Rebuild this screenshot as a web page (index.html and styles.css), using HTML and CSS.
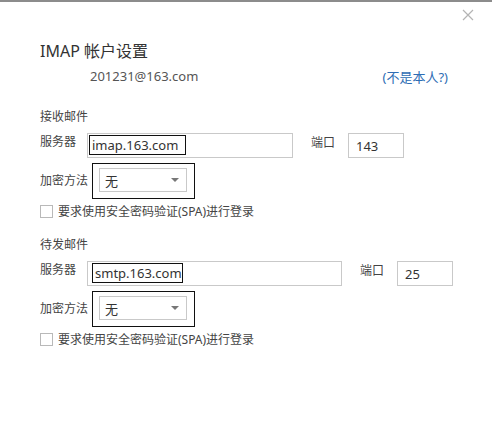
FILE: index.html
```html
<!DOCTYPE html>
<html lang="zh-CN">
<head>
<meta charset="utf-8">
<title>IMAP 帐户设置</title>
<link rel="stylesheet" href="styles.css">
</head>
<body>
<div class="dialog">
  <div class="topbar">
    <svg class="close" width="12" height="12" viewBox="0 0 12 12"><path d="M1 1 L11 11 M11 1 L1 11" stroke="#b4b4b4" stroke-width="1.2" fill="none"/></svg>
  </div>
  <h1 class="title">IMAP 帐户设置</h1>
  <div class="account">
    <span class="email">201231@163.com</span>
    <a class="notme">(不是本人?)</a>
  </div>

  <section class="group first">
    <div class="group-title">接收邮件</div>
    <div class="server-row">
      <span class="label">服务器</span>
      <div class="input server s1"><span class="mark">imap.163.com</span></div>
      <span class="label port-label">端口</span>
      <div class="input port">143</div>
    </div>
    <div class="enc-row">
      <span class="label">加密方法</span>
      <div class="mark-box">
        <div class="select"><span>无</span><span class="arrow"></span></div>
      </div>
    </div>
    <label class="check-row"><span class="checkbox"></span><span class="check-text">要求使用安全密码验证(SPA)进行登录</span></label>
  </section>

  <section class="group second">
    <div class="group-title">待发邮件</div>
    <div class="server-row">
      <span class="label">服务器</span>
      <div class="input server s2"><span class="mark">smtp.163.com</span></div>
      <span class="label port-label">端口</span>
      <div class="input port">25</div>
    </div>
    <div class="enc-row">
      <span class="label">加密方法</span>
      <div class="mark-box">
        <div class="select"><span>无</span><span class="arrow"></span></div>
      </div>
    </div>
    <label class="check-row"><span class="checkbox"></span><span class="check-text">要求使用安全密码验证(SPA)进行登录</span></label>
  </section>
</div>
</body>
</html>
```

FILE: styles.css
```css
* { box-sizing: border-box; }
html, body { margin: 0; padding: 0; background: #fff; }
body {
  width: 492px;
  height: 428px;
  overflow: hidden;
  border-top: 2px solid #8c8c8c;
  font-family: "Noto Sans", "Noto Sans CJK SC", sans-serif;
  color: #444;
}
.dialog { padding: 0 18px 0 40px; }
.topbar {
  height: 38px;
  display: flex;
  justify-content: flex-end;
  align-items: flex-start;
  padding-top: 7px;
}
.close { display: block; }
.title {
  margin: 0;
  font-size: 16px;
  font-weight: normal;
  color: #333;
  line-height: 22px;
  font-family: "Noto Sans", "Noto Sans CJK SC", sans-serif;
}
.account {
  display: flex;
  justify-content: space-between;
  align-items: center;
  height: 22px;
  margin-top: 3px;
  padding-left: 50px;
  padding-right: 26px;
  font-size: 13px;
}
.email { color: #555; }
.notme { color: #2e6db4; text-decoration: none; }

.group-title { font-size: 12px; line-height: 18px; color: #444; }
.group.first { margin-top: 21px; }
.group.second { margin-top: 18px; }

.label { font-size: 12px; color: #444; line-height: 16px; white-space: nowrap; }
.server-row {
  display: flex;
  align-items: flex-start;
  margin-top: 7px;
}
.server-row .label { padding-top: 1px; width: 47px; flex: none; }
.input {
  height: 25px;
  border: 1px solid #c9c9c9;
  font-size: 13px;
  color: #333;
  flex: none;
}
.server { padding: 1px 0 0 1px; }
.s1 { width: 206px; }
.s2 { width: 255px; }
.mark {
  display: inline-block;
  border: 1px solid #111;
  line-height: 18px;
  padding: 0 3px 0 2px;
}
.s1 .mark { width: 97px; }
.s2 .mark { width: 91px; margin-left: 3px; }
.server-row .port-label { width: 37px; margin-left: 18px; padding-top: 2px; }
.port { width: 56px; padding: 3px 0 0 7px; line-height: 18px; }

.enc-row {
  display: flex;
  align-items: center;
  margin-top: 5px;
}
.enc-row .label { width: 52px; flex: none; }
.mark-box {
  border: 1px solid #111;
  padding: 4px 7px 6px 6px;
  width: 103px;
  height: 36px;
}
.select {
  height: 24px;
  border: 1px solid #c9c9c9;
  display: flex;
  align-items: center;
  justify-content: space-between;
  padding: 0 7px 0 5px;
  font-size: 13px;
  color: #333;
}
.arrow {
  width: 0; height: 0;
  border-left: 4px solid transparent;
  border-right: 4px solid transparent;
  border-top: 4px solid #777;
}
.check-row {
  display: flex;
  align-items: center;
  margin-top: 5px;
  height: 14px;
}
.checkbox {
  width: 13px;
  height: 13px;
  border: 1px solid #b9b9b9;
  flex: none;
}
.check-text { font-size: 12px; margin-left: 5px; color: #444; }
```
